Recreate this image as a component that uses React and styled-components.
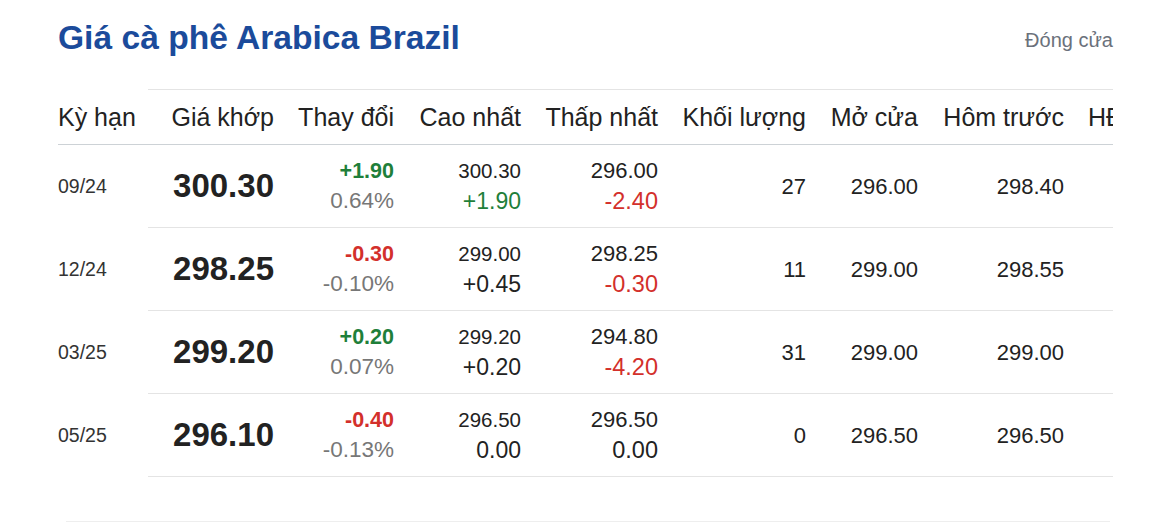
import React from 'react';
import styled, { createGlobalStyle } from 'styled-components';

const GREEN = '#1f7f3a';
const RED = '#d3302b';

const COLUMNS = ['Kỳ hạn', 'Giá khớp', 'Thay đổi', 'Cao nhất', 'Thấp nhất', 'Khối lượng', 'Mở cửa', 'Hôm trước', 'HĐ mở'];

const ROWS = [
    {
        term: '09/24', price: '300.30', change: '+1.90', pct: '0.64%', up: true,
        high: '300.30', highDiff: '+1.90', highColor: GREEN,
        low: '296.00', lowDiff: '-2.40', lowColor: RED,
        volume: '27', open: '296.00', prev: '298.40'
    },
    {
        term: '12/24', price: '298.25', change: '-0.30', pct: '-0.10%', up: false,
        high: '299.00', highDiff: '+0.45', highColor: '#222',
        low: '298.25', lowDiff: '-0.30', lowColor: RED,
        volume: '11', open: '299.00', prev: '298.55'
    },
    {
        term: '03/25', price: '299.20', change: '+0.20', pct: '0.07%', up: true,
        high: '299.20', highDiff: '+0.20', highColor: '#222',
        low: '294.80', lowDiff: '-4.20', lowColor: RED,
        volume: '31', open: '299.00', prev: '299.00'
    },
    {
        term: '05/25', price: '296.10', change: '-0.40', pct: '-0.13%', up: false,
        high: '296.50', highDiff: '0.00', highColor: '#222',
        low: '296.50', lowDiff: '0.00', lowColor: '#222',
        volume: '0', open: '296.50', prev: '296.50'
    },
];

const App = () => {
    return (
        <>
            <GlobalStyle />
            <Page>
                <TopBar>
                    <Title>Giá cà phê Arabica Brazil</Title>
                    <Status>Đóng cửa</Status>
                </TopBar>
                <TableWrap>
                    <HeadRow>
                        {COLUMNS.map((name, index) => <HeadCell key={index}>{name}</HeadCell>)}
                    </HeadRow>
                    {
                        ROWS.map((row, index) => {
                            return (
                                <Row key={index}>
                                    <Cell><Term>{row.term}</Term></Cell>
                                    <Cell><Price>{row.price}</Price></Cell>
                                    <Cell>
                                        <Stack>
                                            <Change $color={row.up ? GREEN : RED}>{row.change}</Change>
                                            <Percent>{row.pct}</Percent>
                                        </Stack>
                                    </Cell>
                                    <Cell>
                                        <Stack>
                                            <Line $size={20.5}>{row.high}</Line>
                                            <Line $size={23} $color={row.highColor}>{row.highDiff}</Line>
                                        </Stack>
                                    </Cell>
                                    <Cell>
                                        <Stack>
                                            <Line $size={22}>{row.low}</Line>
                                            <Line $size={23.5} $color={row.lowColor}>{row.lowDiff}</Line>
                                        </Stack>
                                    </Cell>
                                    <Cell><Value>{row.volume}</Value></Cell>
                                    <Cell><Value>{row.open}</Value></Cell>
                                    <Cell><Value>{row.prev}</Value></Cell>
                                    <Cell />
                                </Row>
                            )
                        })
                    }
                </TableWrap>
                <Divider />
            </Page>
        </>
    )
};

export default App;

const GlobalStyle = createGlobalStyle`
    body{
        margin: 0;
        background: #fff;
        font-family: "Liberation Sans", Arial, sans-serif;
        color: #222;
    }
`;

const Page = styled.div`
    padding: 18px 49px 0 58px;
`;

const TopBar = styled.div`
    display: flex;
    justify-content: space-between;
    align-items: center;
    height: 40px;
    margin-bottom: 31px;
`;

const Title = styled.h1`
    margin: 0;
    font-size: 33.6px;
    line-height: 40px;
    font-weight: bold;
    color: #1b4b9b;
`;

const Status = styled.div`
    font-size: 20px;
    color: #6b717b;
    margin-top: 4px;
`;

const TableWrap = styled.div`
    width: 100%;
    overflow: hidden;
`;

const GRID = '90px 138px 120px 127px 137px 148px 112px 146px 120px';

const HeadRow = styled.div`
    display: grid;
    grid-template-columns: ${GRID};
    height: 56px;
`;

const HeadCell = styled.div`
    display: flex;
    align-items: center;
    justify-content: flex-end;
    padding: 0 12px;
    font-size: 25px;
    color: #222;
    white-space: nowrap;
    border-top: 1px solid #e4e4e4;
    border-bottom: 1px solid #cdd2d6;
    &:first-child{
        justify-content: flex-start;
        padding-left: 0;
        border-top-color: transparent;
    }
    &:last-child{
        justify-content: flex-start;
    }
`;

const Row = styled.div`
    display: grid;
    grid-template-columns: ${GRID};
    height: 83px;
`;

const Cell = styled.div`
    display: flex;
    align-items: center;
    justify-content: flex-end;
    padding: 0 12px;
    border-bottom: 1px solid #e4e4e4;
    &:first-child{
        justify-content: flex-start;
        padding-left: 0;
        border-bottom-color: transparent;
    }
`;

const Term = styled.span`
    font-size: 19.5px;
    color: #333;
`;

const Price = styled.span`
    font-size: 33px;
    font-weight: bold;
    color: #222;
`;

const Stack = styled.div`
    display: flex;
    flex-direction: column;
    align-items: flex-end;
`;

const Change = styled.span`
    font-size: 21.5px;
    line-height: 30px;
    font-weight: bold;
    color: ${p => p.$color};
`;

const Percent = styled.span`
    font-size: 22.5px;
    line-height: 30px;
    color: #777;
`;

const Line = styled.span`
    font-size: ${p => p.$size}px;
    line-height: 30px;
    color: ${p => p.$color || '#222'};
`;

const Value = styled.span`
    font-size: 22px;
    color: #222;
    margin-top: 2px;
`;

const Divider = styled.div`
    margin: 44px 3px 0 8px;
    border-top: 1px solid #eee;
`;
